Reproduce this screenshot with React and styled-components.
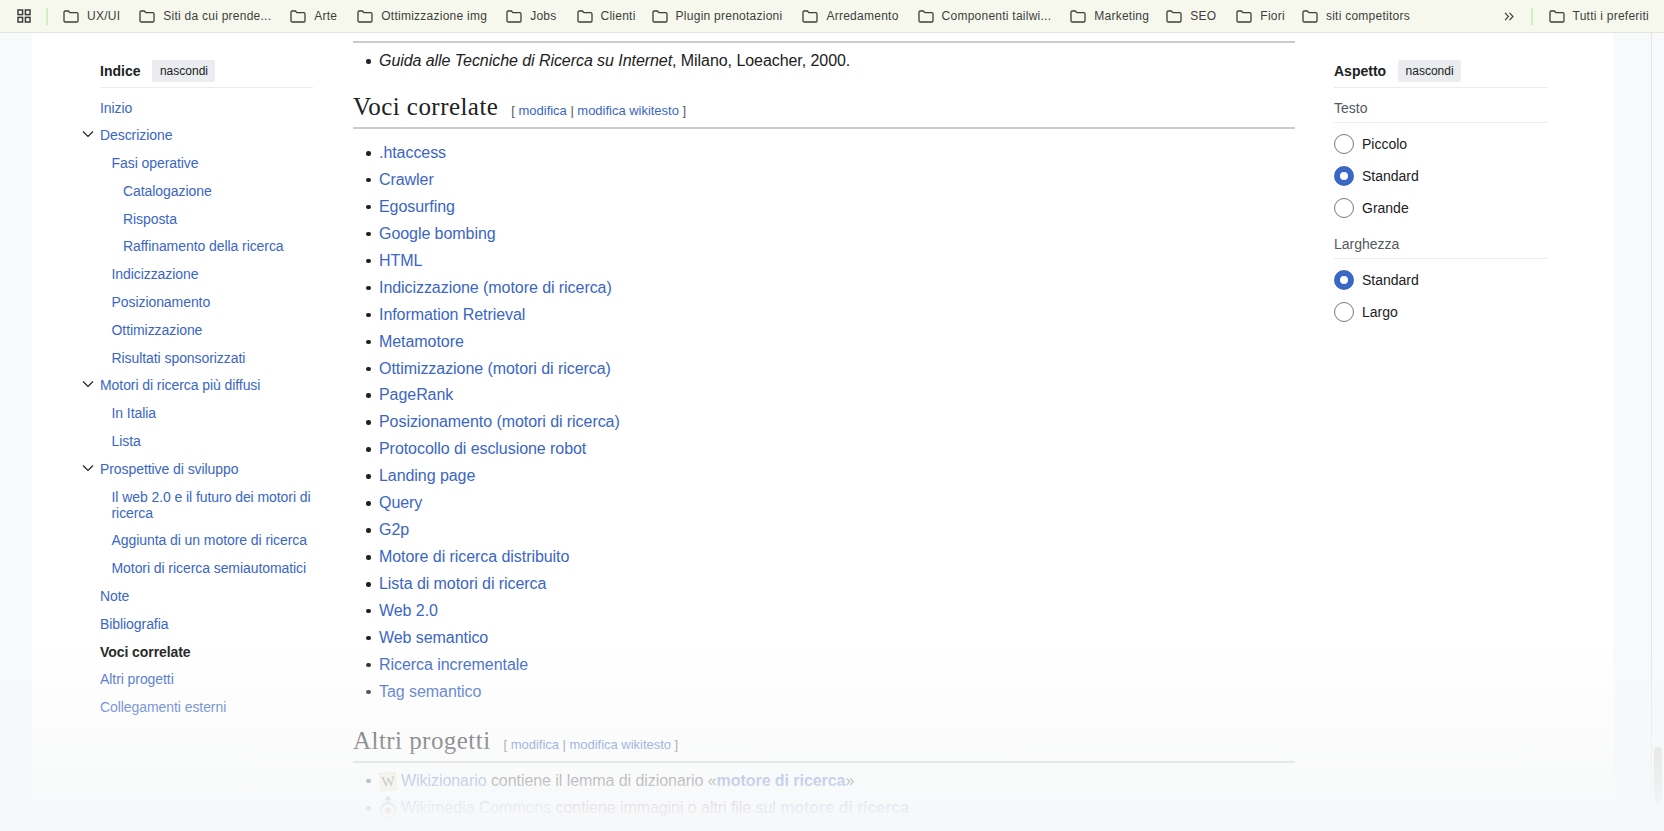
import React from 'react';
import styled, { createGlobalStyle } from 'styled-components';

const LINK = '#3a66c4';

const GlobalStyle = createGlobalStyle`
  html, body {
    margin: 0;
    height: 100%;
    overflow: hidden;
    background: #f8f9fa;
    font-family: "Liberation Sans", Arial, sans-serif;
    color: #202122;
  }
`;

const Window = styled.div`
  position: relative;
  height: 831px;
  overflow: hidden;
  display: flex;
  flex-direction: column;
`;

const Toolbar = styled.div`
  height: 33px;
  flex: none;
  box-sizing: border-box;
  display: flex;
  align-items: center;
  padding-left: 17px;
  background: #f6f8ee;
  border-bottom: 1px solid #e3e4dc;
  color: #3c3f3a;
  font-size: 12px;
  letter-spacing: 0.25px;
`;

const ToolbarSep = styled.span`
  width: 2px;
  height: 17px;
  background: #d2ecc4;
  margin: ${({ $margin }) => $margin};
`;

const Bookmark = styled.span`
  display: flex;
  align-items: center;
  gap: 8px;
  margin-right: ${({ $gap }) => $gap}px;
  white-space: nowrap;
`;

const Overflow = styled.svg`
  width: 10px;
  height: 9px;
  margin-left: auto;
`;

const Shell = styled.div`
  flex: 1;
  display: flex;
  min-height: 0;
`;

const Page = styled.div`
  flex: 1;
  margin: 0 37px 0 32px;
  background: #fff;
  display: grid;
  grid-template-columns: 68px 213px 40px 942px 39px 214px;
  align-content: start;
`;

const Sidebar = styled.nav`
  grid-column: ${({ $col }) => $col};
  padding-top: 26px;
  font-size: 14px;
`;

const SideHeader = styled.div`
  display: flex;
  align-items: center;
  gap: 12px;
  height: 28.500px;
  padding-bottom: 4px;
  box-sizing: border-box;
  border-bottom: 1px solid #eaecf0;
`;

const SideTitle = styled.span`
  font-weight: bold;
  font-size: 14px;
`;

const HideButton = styled.span`
  width: 63px;
  height: 22px;
  line-height: 22px;
  text-align: center;
  font-size: 12px;
  background: #eaecf0;
  border-radius: 2px;
`;

const TocList = styled.ul`
  list-style: none;
  margin: 0;
  padding: 6px 0 0;
`;

const TocItem = styled.li`
  position: relative;
  padding: 6px 0 5.8px ${({ $level }) => $level * 11.5}px;
  line-height: 16px;
  color: ${({ $active }) => ($active ? '#202122' : LINK)};
  font-weight: ${({ $active }) => ($active ? 'bold' : 'normal')};
  letter-spacing: -0.07px;
`;

const Chevron = styled.svg`
  position: absolute;
  left: -18px;
  top: 8px;
  width: 12px;
  height: 10px;
`;

const Main = styled.main`
  grid-column: 4;
  padding-top: 8px;
`;

const TopRule = styled.div`
  height: 2px;
  background: #c8ccd1;
`;

const Bullets = styled.ul`
  list-style: none;
  margin: ${({ $margin }) => $margin};
  padding: 0 0 0 26px;
  font-size: 16px;
  line-height: 22px;
  letter-spacing: -0.06px;
`;

const Bullet = styled.li`
  position: relative;
  margin-bottom: 4.95px;

  &::before {
    content: '';
    position: absolute;
    left: -13px;
    top: 9px;
    width: 4.500px;
    height: 4.500px;
    border-radius: 50%;
    background: #202122;
  }
`;

const Heading = styled.h2`
  display: flex;
  align-items: baseline;
  margin: ${({ $margin }) => $margin};
  padding-bottom: 0;
  border-bottom: 2px solid #c8ccd1;
  font-family: "Liberation Serif", Georgia, serif;
  font-size: 25px;
  font-weight: normal;
  line-height: 32px;
  letter-spacing: 0.45px;
`;

const EditLinks = styled.span`
  margin-left: 13px;
  font-family: "Liberation Sans", Arial, sans-serif;
  font-size: 13px;
  letter-spacing: -0.02px;
  color: #54595d;
`;

const A = styled.span`
  color: ${LINK};
  font-weight: ${({ $bold }) => ($bold ? 'bold' : 'normal')};
`;

const TinyIcon = styled.svg`
  width: 18px;
  height: 24px;
  vertical-align: middle;
  margin: -2px 4px 0 0;
`;

const RadioRow = styled.div`
  display: flex;
  align-items: center;
  gap: 8px;
  height: 32px;
  font-size: 14px;
`;

const RadioDot = styled.span`
  width: 20px;
  height: 20px;
  box-sizing: border-box;
  border-radius: 50%;
  background: #fff;
  border: ${({ $on }) => ($on ? `6px solid ${LINK}` : '1px solid #72777d')};
`;

const GroupLabel = styled.div`
  margin-top: ${({ $top }) => $top}px;
  height: 28px;
  line-height: 28px;
  margin-bottom: 5.5px;
  border-bottom: 1px solid #eaecf0;
  font-size: 14px;
  color: #54595d;
`;

const ScrollTrack = styled.div`
  flex: none;
  width: 12px;
  border-left: 1px solid #e6e6e6;
`;

const ScrollThumb = styled.div`
  width: 8px;
  height: 57px;
  margin: 714px 0 0 2px;
  border-radius: 4px;
  background: #d6d6d6;
`;

const Fade = styled.div`
  position: absolute;
  left: 0;
  right: 0;
  bottom: 0;
  height: 186px;
  pointer-events: none;
  background: linear-gradient(
    to bottom,
    rgba(247, 248, 249, 0) 0%,
    rgba(247, 248, 249, 0.72) 72%,
    rgba(247, 248, 249, 0.93) 88%,
    rgba(247, 248, 249, 1) 100%
  );
`;

const FolderIcon = () => (
  <svg width="16" height="13" viewBox="0 0 16 13" fill="none" stroke="#3c3f3a" strokeWidth="1.3">
    <path d="M1 2.2C1 1.5 1.5 1 2.2 1h3.2l1.5 1.7h6.9c.7 0 1.2.5 1.2 1.2v6.9c0 .7-.5 1.2-1.2 1.2H2.2c-.7 0-1.2-.5-1.2-1.2z" />
  </svg>
);

const AppsIcon = () => (
  <svg width="14" height="14" viewBox="0 0 14 14" fill="none" stroke="#3c3f3a" strokeWidth="1.5">
    <rect x="1" y="1" width="4.6" height="4.6" />
    <rect x="8.4" y="1" width="4.6" height="4.6" />
    <rect x="1" y="8.4" width="4.6" height="4.6" />
    <rect x="8.4" y="8.4" width="4.6" height="4.6" />
  </svg>
);

const bookmarks = [
  ['UX/UI', 19],
  ['Siti da cui prende...', 19],
  ['Arte', 20],
  ['Ottimizzazione img', 19],
  ['Jobs', 20],
  ['Clienti', 16],
  ['Plugin prenotazioni', 20],
  ['Arredamento', 19],
  ['Componenti tailwi...', 19],
  ['Marketing', 17],
  ['SEO', 20],
  ['Fiori', 17],
  ['siti competitors', 0],
];

const tocItems = [
  { label: 'Inizio', level: 0 },
  { label: 'Descrizione', level: 0, open: true },
  { label: 'Fasi operative', level: 1 },
  { label: 'Catalogazione', level: 2 },
  { label: 'Risposta', level: 2 },
  { label: 'Raffinamento della ricerca', level: 2 },
  { label: 'Indicizzazione', level: 1 },
  { label: 'Posizionamento', level: 1 },
  { label: 'Ottimizzazione', level: 1 },
  { label: 'Risultati sponsorizzati', level: 1 },
  { label: 'Motori di ricerca più diffusi', level: 0, open: true },
  { label: 'In Italia', level: 1 },
  { label: 'Lista', level: 1 },
  { label: 'Prospettive di sviluppo', level: 0, open: true },
  { label: 'Il web 2.0 e il futuro dei motori di ricerca', level: 1 },
  { label: 'Aggiunta di un motore di ricerca', level: 1 },
  { label: 'Motori di ricerca semiautomatici', level: 1 },
  { label: 'Note', level: 0 },
  { label: 'Bibliografia', level: 0 },
  { label: 'Voci correlate', level: 0, active: true },
  { label: 'Altri progetti', level: 0 },
  { label: 'Collegamenti esterni', level: 0 },
];

const related = [
  '.htaccess',
  'Crawler',
  'Egosurfing',
  'Google bombing',
  'HTML',
  'Indicizzazione (motore di ricerca)',
  'Information Retrieval',
  'Metamotore',
  'Ottimizzazione (motori di ricerca)',
  'PageRank',
  'Posizionamento (motori di ricerca)',
  'Protocollo di esclusione robot',
  'Landing page',
  'Query',
  'G2p',
  'Motore di ricerca distribuito',
  'Lista di motori di ricerca',
  'Web 2.0',
  'Web semantico',
  'Ricerca incrementale',
  'Tag semantico',
];

const Edit = () => (
  <EditLinks>
    [ <A>modifica</A> | <A>modifica wikitesto</A> ]
  </EditLinks>
);

export default function App() {
  return (
    <Window>
      <GlobalStyle />
      <Toolbar>
        <AppsIcon />
        <ToolbarSep $margin="0 15px 0 15px" />
        {bookmarks.map(([name, gap]) => (
          <Bookmark key={name} $gap={gap}>
            <FolderIcon />
            {name}
          </Bookmark>
        ))}
        <Overflow viewBox="0 0 10 9" fill="none" stroke="#3c3f3a" strokeWidth="1.2">
          <path d="M1 .8l3.500 3.700L1 8.200M5.500 .8L9 4.500 5.500 8.200" />
        </Overflow>
        <ToolbarSep $margin="0 16px 0 17px" />
        <Bookmark $gap={15}>
          <FolderIcon />
          Tutti i preferiti
        </Bookmark>
      </Toolbar>
      <Shell>
        <Page>
          <Sidebar $col={2}>
            <SideHeader>
              <SideTitle>Indice</SideTitle>
              <HideButton>nascondi</HideButton>
            </SideHeader>
            <TocList>
              {tocItems.map((item) => (
                <TocItem key={item.label} $level={item.level} $active={item.active}>
                  {item.open && (
                    <Chevron viewBox="0 0 12 10" fill="none" stroke="#202122" strokeWidth="1.2">
                      <path d="M1 2.5l5 5 5-5" />
                    </Chevron>
                  )}
                  {item.label}
                </TocItem>
              ))}
            </TocList>
          </Sidebar>
          <Main>
            <TopRule />
            <Bullets $margin="7px 0 0">
              <Bullet>
                <i>Guida alle Tecniche di Ricerca su Internet</i>, Milano, Loeacher, 2000.
              </Bullet>
            </Bullets>
            <Heading $margin="19px 0 0">
              Voci correlate
              <Edit />
            </Heading>
            <Bullets $margin="13px 0 0">
              {related.map((name) => (
                <Bullet key={name}>
                  <A>{name}</A>
                </Bullet>
              ))}
            </Bullets>
            <Heading $margin="22px 0 0">
              Altri progetti
              <Edit />
            </Heading>
            <Bullets $margin="7px 0 0">
              <Bullet>
                <TinyIcon viewBox="0 0 18 24">
                  <g transform="rotate(-5 9 12)">
                    <rect x="1.500" y="4" width="15" height="17" fill="#f3eccf" stroke="#d8d2b4" />
                    <text x="9" y="17" fontSize="14" fontFamily="Liberation Serif" textAnchor="middle" fill="#333">
                      W
                    </text>
                  </g>
                </TinyIcon>
                <A>Wikizionario</A> contiene il lemma di dizionario «<A $bold>motore di ricerca</A>»
              </Bullet>
              <Bullet>
                <TinyIcon viewBox="0 0 18 24">
                  <circle cx="9" cy="14.500" r="7.500" fill="none" stroke="#888" strokeWidth="2" />
                  <circle cx="9" cy="14.500" r="3" fill="#b33" />
                  <path d="M9 1v6M6.500 4L9 1l2.500 3" fill="none" stroke="#555" strokeWidth="1.300" />
                </TinyIcon>
                <A>Wikimedia Commons</A> contiene immagini o altri file sul <A $bold>motore di ricerca</A>
              </Bullet>
            </Bullets>
          </Main>
          <Sidebar $col={6}>
            <SideHeader>
              <SideTitle>Aspetto</SideTitle>
              <HideButton>nascondi</HideButton>
            </SideHeader>
            <GroupLabel $top={6}>Testo</GroupLabel>
            <RadioRow><RadioDot />Piccolo</RadioRow>
            <RadioRow><RadioDot $on />Standard</RadioRow>
            <RadioRow><RadioDot />Grande</RadioRow>
            <GroupLabel $top={5.5}>Larghezza</GroupLabel>
            <RadioRow><RadioDot $on />Standard</RadioRow>
            <RadioRow><RadioDot />Largo</RadioRow>
          </Sidebar>
        </Page>
        <ScrollTrack>
          <ScrollThumb />
        </ScrollTrack>
      </Shell>
      <Fade />
    </Window>
  );
}
